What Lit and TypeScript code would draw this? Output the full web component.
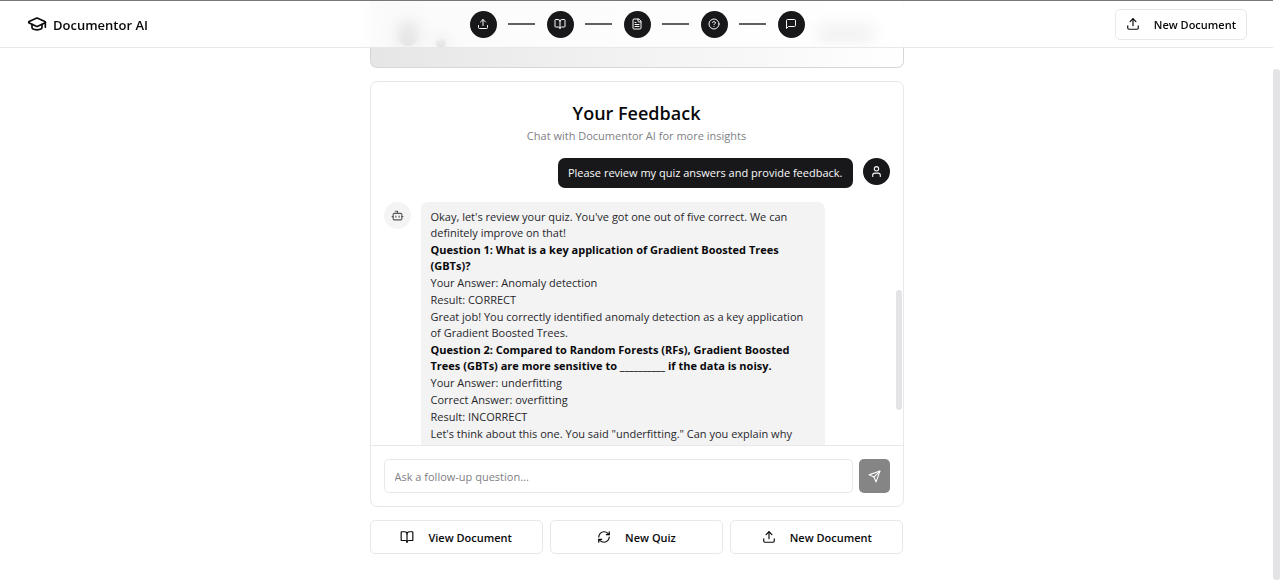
import { LitElement, html, css, svg } from "lit";
import { customElement } from "lit/decorators.js";

const icons = {
  cap: svg`<path d="M21.42 10.922a1 1 0 0 0-.019-1.838L12.83 5.18a2 2 0 0 0-1.66 0L2.6 9.08a1 1 0 0 0 0 1.832l8.57 3.908a2 2 0 0 0 1.66 0z"/><path d="M22 10v6"/><path d="M6 12.5V16a6 3 0 0 0 12 0v-3.5"/>`,
  upload: svg`<path d="M21 15v4a2 2 0 0 1-2 2H5a2 2 0 0 1-2-2v-4"/><path d="m17 8-5-5-5 5"/><path d="M12 3v12"/>`,
  book: svg`<path d="M12 7v14"/><path d="M3 18a1 1 0 0 1-1-1V4a1 1 0 0 1 1-1h5a4 4 0 0 1 4 4 4 4 0 0 1 4-4h5a1 1 0 0 1 1 1v13a1 1 0 0 1-1 1h-6a3 3 0 0 0-3 3 3 3 0 0 0-3-3z"/>`,
  file: svg`<path d="M15 2H6a2 2 0 0 0-2 2v16a2 2 0 0 0 2 2h12a2 2 0 0 0 2-2V7Z"/><path d="M14 2v4a2 2 0 0 0 2 2h4"/><path d="M10 9H8"/><path d="M16 13H8"/><path d="M16 17H8"/>`,
  help: svg`<circle cx="12" cy="12" r="10"/><path d="M9.09 9a3 3 0 0 1 5.83 1c0 2-3 3-3 3"/><path d="M12 17h.01"/>`,
  message: svg`<path d="M21 15a2 2 0 0 1-2 2H7l-4 4V5a2 2 0 0 1 2-2h14a2 2 0 0 1 2 2z"/>`,
  user: svg`<path d="M19 21v-2a4 4 0 0 0-4-4H9a4 4 0 0 0-4 4v2"/><circle cx="12" cy="7" r="4"/>`,
  bot: svg`<path d="M12 8V4H8"/><rect width="16" height="12" x="4" y="8" rx="2"/><path d="M2 14h2"/><path d="M20 14h2"/><path d="M15 13v2"/><path d="M9 13v2"/>`,
  refresh: svg`<path d="M3 12a9 9 0 0 1 9-9 9.75 9.75 0 0 1 6.74 2.74L21 8"/><path d="M21 3v5h-5"/><path d="M21 12a9 9 0 0 1-9 9 9.75 9.75 0 0 1-6.74-2.74L3 16"/><path d="M8 16H3v5"/>`,
  send: svg`<path d="m22 2-7 20-4-9-9-4Z"/><path d="M22 2 11 13"/>`,
};

type IconName = keyof typeof icons;

const icon = (name: IconName, size = "") => html`
  <svg class="icon ${size}" viewBox="0 0 24 24" aria-hidden="true">${icons[name]}</svg>
`;

const steps: { icon: IconName; label: string }[] = [
  { icon: "upload", label: "Upload" },
  { icon: "book", label: "Read" },
  { icon: "file", label: "Summary" },
  { icon: "help", label: "Quiz" },
  { icon: "message", label: "Feedback" },
];

const feedback: { text: string; strong?: boolean }[] = [
  { text: "Okay, let's review your quiz. You've got one out of five correct. We can definitely improve on that!" },
  { text: "Question 1: What is a key application of Gradient Boosted Trees (GBTs)?", strong: true },
  { text: "Your Answer: Anomaly detection" },
  { text: "Result: CORRECT" },
  { text: "Great job! You correctly identified anomaly detection as a key application of Gradient Boosted Trees." },
  { text: "Question 2: Compared to Random Forests (RFs), Gradient Boosted Trees (GBTs) are more sensitive to __________ if the data is noisy.", strong: true },
  { text: "Your Answer: underfitting" },
  { text: "Correct Answer: overfitting" },
  { text: "Result: INCORRECT" },
  { text: "Let's think about this one. You said \"underfitting.\" Can you explain why" },
];

@customElement("app-root")
export class AppRoot extends LitElement {
  static styles = css`
    :host {
      display: grid;
      grid-template-columns: minmax(0, 1fr) 7px;
      height: 100vh;
      overflow: hidden;
      background: #fff;
      color: #09090b;
      font-family: "Open Sans", "Noto Sans", sans-serif;
      font-size: 11px;
      line-height: 16px;
    }
    * { box-sizing: border-box; }
    h1, p, ol { margin: 0; padding: 0; }
    button, input { font: inherit; color: inherit; }
    .icon {
      width: 14px;
      height: 14px;
      flex: none;
      fill: none;
      stroke: currentColor;
      stroke-width: 2;
      stroke-linecap: round;
      stroke-linejoin: round;
    }
    .icon.tiny { width: 12px; height: 12px; }
    .icon.small { width: 13px; height: 13px; }
    .icon.large { width: 20px; height: 20px; }

    .page { position: relative; }
    .header {
      position: absolute;
      inset: 0 0 auto;
      z-index: 1;
      display: grid;
      grid-template-columns: 1fr auto 1fr;
      align-items: center;
      height: 48px;
      padding: 0 26px 0 27px;
      border-top: 1px solid #77777a;
      border-bottom: 1px solid #e8e8ea;
      background: rgba(255, 255, 255, 0.8);
      backdrop-filter: blur(8px);
    }
    .brand {
      display: flex;
      align-items: center;
      gap: 6px;
      font-size: 13px;
      font-weight: 600;
    }
    .steps { display: flex; align-items: center; list-style: none; }
    .step { display: flex; align-items: center; }
    .step + .step::before {
      content: "";
      width: 27px;
      height: 2px;
      margin: 0 12px 0 11px;
      background: #606062;
    }
    .dot {
      display: grid;
      place-items: center;
      width: 27px;
      height: 27px;
      border-radius: 50%;
      background: #18181b;
      color: #fafafa;
    }
    .button {
      display: flex;
      align-items: center;
      justify-content: center;
      gap: 14px;
      height: 34px;
      padding: 0 10px;
      border: 1px solid #e8e8ea;
      border-radius: 5px;
      background: #fff;
      font-weight: 600;
    }
    .label { padding-top: 2px; }
    .header .button { justify-self: end; height: 31px; }

    .column {
      display: flex;
      flex-direction: column;
      gap: 13px;
      max-width: 534px;
      margin: 0 auto;
    }
    .summary {
      display: flex;
      align-items: flex-start;
      gap: 18px;
      height: 68px;
      padding: 22px 27px;
      border: 1px solid #d6d6d7;
      border-top: 0;
      border-radius: 0 0 7px 7px;
      background: linear-gradient(to right, #e6e6e7, #fff);
    }
    .badge { width: 20px; height: 24px; border-radius: 10px; background: #606063; }
    .mark { width: 10px; height: 8px; margin-top: 17px; border-radius: 4px; background: #1c1c1e; }
    .pill { width: 60px; height: 16px; margin: 3px 0 0 auto; border-radius: 8px; background: #b4b4b7; }

    .card { border: 1px solid #e8e8ea; border-radius: 7px; background: #fff; }
    .intro { padding: 19px 13px 13px; text-align: center; }
    .title { font-size: 18px; line-height: 24px; font-weight: 600; }
    .subtitle { margin-top: 2px; line-height: 18px; color: #808085; }
    .log {
      display: grid;
      grid-template-columns: minmax(0, 1fr) 7px;
      height: 287px;
      overflow: hidden;
    }
    .messages { display: flex; flex-direction: column; gap: 14px; padding: 0 6px 0 13px; }
    .message { display: flex; align-items: flex-start; gap: 10px; }
    .message.mine { justify-content: flex-end; }
    .avatar {
      display: grid;
      place-items: center;
      flex: none;
      width: 27px;
      height: 27px;
      border-radius: 50%;
      background: #f4f4f5;
      color: #55555a;
    }
    .mine .avatar { background: #18181b; color: #fafafa; }
    .bubble {
      max-width: 404px;
      padding: 7px 10px;
      border-radius: 7px;
      background: #f3f3f4;
      color: #27272a;
    }
    .mine .bubble { background: #18181b; color: #fafafa; }
    .bubble p + p { margin-top: 1px; }
    .strong { font-weight: 700; color: #09090b; }
    .thumb { width: 6px; border-radius: 3px; background: #e4e4e6; }
    .log .thumb { height: 120px; margin-top: 132px; }
    .page-thumb { width: 7px; margin-top: 69px; }

    .composer {
      display: flex;
      gap: 6px;
      padding: 13px;
      border-top: 1px solid #e8e8ea;
    }
    .input {
      flex: 1;
      min-width: 0;
      height: 34px;
      padding: 0 10px;
      border: 1px solid #e8e8ea;
      border-radius: 5px;
      background: #fff;
    }
    .input::placeholder { color: #808085; opacity: 1; }
    .send {
      display: grid;
      place-items: center;
      width: 31px;
      height: 34px;
      padding: 0;
      border: 0;
      border-radius: 5px;
      background: #858586;
      color: #fff;
    }
    .actions { display: grid; grid-template-columns: repeat(3, 1fr); gap: 7px; }
  `;

  render() {
    return html`
      <div class="page">
        <header class="header">
          <div class="brand">${icon("cap", "large")}<span class="label">Documentor AI</span></div>
          <ol class="steps">
            ${steps.map((s) => html`
              <li class="step"><span class="dot" role="img" aria-label=${s.label}>${icon(s.icon, "tiny")}</span></li>
            `)}
          </ol>
          <button class="button" type="button">${icon("upload")}<span class="label">New Document</span></button>
        </header>
        <main class="column">
          <div class="summary">
            <span class="badge"></span><span class="mark"></span><span class="pill"></span>
          </div>
          <section class="card">
            <div class="intro">
              <h1 class="title">Your Feedback</h1>
              <p class="subtitle">Chat with Documentor AI for more insights</p>
            </div>
            <div class="log">
              <div class="messages">
                <div class="message mine">
                  <div class="bubble"><p>Please review my quiz answers and provide feedback.</p></div>
                  <span class="avatar">${icon("user", "small")}</span>
                </div>
                <div class="message">
                  <span class="avatar">${icon("bot", "small")}</span>
                  <div class="bubble">
                    ${feedback.map((f) => html`<p class=${f.strong ? "strong" : "plain"}>${f.text}</p>`)}
                  </div>
                </div>
              </div>
              <div class="thumb"></div>
            </div>
            <form class="composer" @submit=${(e: Event) => e.preventDefault()}>
              <input class="input" type="text" aria-label="Ask a follow-up question" placeholder="Ask a follow-up question..." />
              <button class="send" type="submit" aria-label="Send">${icon("send", "small")}</button>
            </form>
          </section>
          <div class="actions">
            <button class="button" type="button">${icon("book")}<span class="label">View Document</span></button>
            <button class="button" type="button">${icon("refresh")}<span class="label">New Quiz</span></button>
            <button class="button" type="button">${icon("upload")}<span class="label">New Document</span></button>
          </div>
        </main>
      </div>
      <div class="thumb page-thumb"></div>
    `;
  }
}
